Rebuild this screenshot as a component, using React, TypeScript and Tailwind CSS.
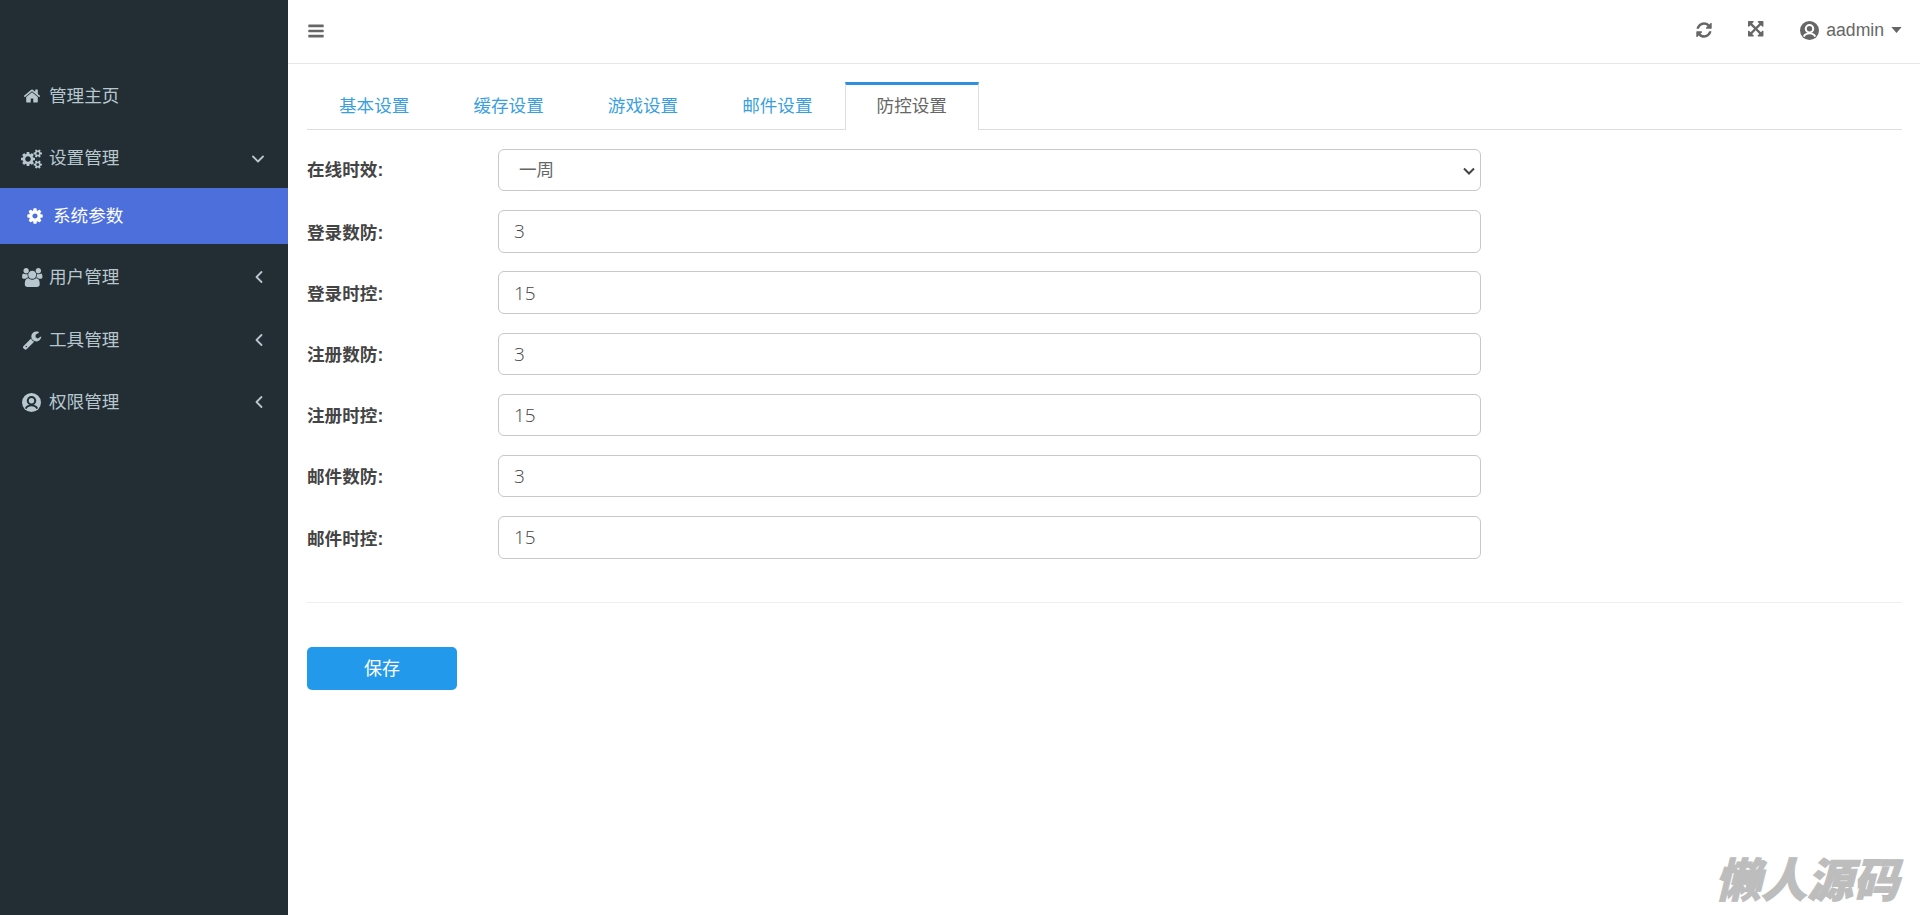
import { ChevronDown, ChevronLeft } from "lucide-react";

const fontStack = { fontFamily: '"Liberation Sans", "Noto Sans CJK SC", sans-serif' };

const tabs = ["基本设置", "缓存设置", "游戏设置", "邮件设置"];

const fields = [
  { label: "登录数防:", value: "3" },
  { label: "登录时控:", value: "15" },
  { label: "注册数防:", value: "3" },
  { label: "注册时控:", value: "15" },
  { label: "邮件数防:", value: "3" },
  { label: "邮件时控:", value: "15" },
];

const icons = {
  home: "M1472 992v480q0 26-19 45t-45 19h-384v-384h-256v384h-384q-26 0-45-19t-19-45v-480q0-1 .5-3t.5-3l575-474 575 474q1 2 1 6zm223-69l-62 74q-8 9-21 11h-3q-13 0-21-7l-692-577-692 577q-12 8-24 7-13-2-21-11l-62-74q-8-10-7-23.5t11-21.5l719-599q32-26 76-26t76 26l244 204v-195q0-14 9-23t23-9h192q14 0 23 9t9 23v408l219 182q10 8 11 21.5t-7 23.5z",
  cogs: "M896 896q0-106-75-181t-181-75-181 75-75 181 75 181 181 75 181-75 75-181zm768 512q0-52-38-90t-90-38-90 38-38 90q0 53 37.5 90.5t90.5 37.5 90.5-37.5 37.5-90.5zm0-1024q0-52-38-90t-90-38-90 38-38 90q0 53 37.5 90.5t90.5 37.5 90.5-37.5 37.5-90.5zm-384 421v185q0 10-7 19.5t-16 10.5l-155 24q-11 35-32 76 34 48 90 115 7 11 7 20 0 12-7 19-23 30-82.5 89.5t-78.5 59.5q-11 0-21-7l-115-90q-37 19-77 31-11 108-23 155-7 24-30 24h-186q-11 0-20-7.5t-10-17.5l-23-153q-34-10-75-31l-118 89q-7 7-20 7-11 0-21-8-144-133-144-160 0-9 7-19 10-14 41-53t47-61q-23-44-35-82l-152-24q-10-1-17-9.5t-7-19.5v-185q0-10 7-19.5t16-10.5l155-24q11-35 32-76-34-48-90-115-7-11-7-20 0-12 7-20 22-30 82-89t79-59q11 0 21 7l115 90q34-18 77-32 11-108 23-154 7-24 30-24h186q11 0 20 7.5t10 17.5l23 153q34 10 75 31l118-89q8-7 20-7 11 0 21 8 144 133 144 160 0 8-7 19-12 16-42 54t-45 60q23 48 34 82l152 23q10 2 17 10.5t7 19.5zm640 533v140q0 16-149 31-12 27-30 52 51 113 51 138 0 4-4 7-122 71-124 71-8 0-46-47t-52-68q-20 2-30 2t-30-2q-14 21-52 68t-46 47q-2 0-124-71-4-3-4-7 0-25 51-138-18-25-30-52-149-15-149-31v-140q0-16 149-31 13-29 30-52-51-113-51-138 0-4 4-7 4-2 35-20t59-34 30-16q8 0 46 46.5t52 67.5q20-2 30-2t30 2q51-71 92-112l6-2q4 0 124 70 4 3 4 7 0 25-51 138 17 23 30 52 149 15 149 31zm0-1024v140q0 16-149 31-12 27-30 52 51 113 51 138 0 4-4 7-122 71-124 71-8 0-46-47t-52-68q-20 2-30 2t-30-2q-14 21-52 68t-46 47q-2 0-124-71-4-3-4-7 0-25 51-138-18-25-30-52-149-15-149-31v-140q0-16 149-31 13-29 30-52-51-113-51-138 0-4 4-7 4-2 35-20t59-34 30-16q8 0 46 46.5t52 67.5q20-2 30-2t30 2q51-71 92-112l6-2q4 0 124 70 4 3 4 7 0 25-51 138 17 23 30 52 149 15 149 31z",
  cog: "M1152 896q0-106-75-181t-181-75-181 75-75 181 75 181 181 75 181-75 75-181zm512-109v222q0 12-8 23t-20 13l-185 28q-19 54-39 91 35 50 107 138 10 12 10 25t-9 23q-27 37-99 108t-94 71q-12 0-26-9l-138-108q-44 23-91 38-16 136-29 186-7 28-36 28h-222q-14 0-24.5-8.5t-11.5-21.5l-28-184q-49-16-90-37l-141 107q-10 9-25 9-14 0-25-11-126-114-165-168-7-10-7-23 0-12 8-23 15-21 51-66.5t54-70.5q-27-50-41-99l-183-27q-13-2-21-12.5t-8-23.5v-222q0-12 8-23t19-13l186-28q14-46 39-92-40-57-107-138-10-12-10-24 0-10 9-23 26-36 98.5-107.5t94.5-71.5q13 0 26 10l138 107q44-23 91-38 16-136 29-186 7-28 36-28h222q14 0 24.5 8.5t11.5 21.5l28 184q49 16 90 37l142-107q9-9 24-9 13 0 25 10 129 119 165 170 7 8 7 22 0 12-8 23-15 21-51 66.5t-54 70.5q26 50 41 98l183 28q13 2 21 12.5t8 23.5z",
  users: "M593 640q-162 5-265 128h-134q-82 0-138-40.5t-56-118.5q0-353 124-353 6 0 43.5 21t97.5 42.5 119 21.5q67 0 133-23-5 37-5 66 0 139 81 256zm1071 637q0 120-73 189.5t-194 69.5h-874q-121 0-194-69.5t-73-189.5q0-53 3.5-103.5t14-109 26.5-108.5 43-97.5 62-81 85.5-53.5 111.5-20q10 0 43 21.5t73 48 107 48 135 21.5 135-21.5 107-48 73-48 43-21.5q61 0 111.5 20t85.5 53.5 62 81 43 97.5 26.5 108.5 14 109 3.5 103.5zm-1024-1277q0 106-75 181t-181 75-181-75-75-181 75-181 181-75 181 75 75 181zm704 384q0 159-112.5 271.5t-271.5 112.5-271.5-112.5-112.5-271.5 112.5-271.5 271.5-112.5 271.5 112.5 112.5 271.5zm576 225q0 78-56 118.5t-138 40.5h-134q-103-123-265-128 81-117 81-256 0-29-5-66 66 23 133 23 59 0 119-21.5t97.5-42.5 43.5-21q124 0 124 353zm-128-609q0 106-75 181t-181 75-181-75-75-181 75-181 181-75 181 75 75 181z",
  wrench: "M448 1472q0-26-19-45t-45-19-45 19-19 45 19 45 45 19 45-19 19-45zm644-420l-682 682q-37 37-90 37-52 0-91-37l-106-108q-38-36-38-90 0-53 38-91l681-681q39 98 114.5 173.5t173.5 114.5zm634-435q0 39-23 106-47 134-164.5 217.5t-258.5 83.5q-185 0-316.5-131.5t-131.5-316.5 131.5-316.5 316.5-131.5q58 0 121.5 16.5t107.5 46.5q16 11 16 28t-16 28l-293 169v224l193 115q5-3 79-48.5t135.5-81 70.5-35.5q15 0 23.5 10t8.5 25z",
  refresh: "M1639 1056q0 5-1 7-64 268-268 434.5t-478 166.5q-146 0-282.5-55t-243.5-157l-129 129q-19 19-45 19t-45-19-19-45v-448q0-26 19-45t45-19h448q26 0 45 19t19 45-19 45l-137 137q71 66 161 102t187 36q134 0 250-65t186-179q11-17 53-117 8-23 30-23h192q13 0 22.5 9.5t9.5 22.5zm25-800v448q0 26-19 45t-45 19h-448q-26 0-45-19t-19-45 19-45l138-138q-148-137-349-137-134 0-250 65t-186 179q-11 17-53 117-8 23-30 23h-199q-13 0-22.5-9.5t-9.5-22.5v-7q65-268 270-434.5t480-166.5q146 0 284 55.5t245 156.5l130-129q19-19 45-19t45 19 19 45z",
  expand: "M1283 413l-355 355 355 355 144-144q29-31 70-14 39 17 39 59v448q0 26-19 45t-45 19h-448q-42 0-59-40-17-39 14-69l144-144-355-355-355 355 144 144q31 30 14 69-17 40-59 40h-448q-26 0-45-19t-19-45v-448q0-42 40-59 39-17 69 14l144 144 355-355-355-355-144 144q-19 19-45 19-12 0-24-5-40-17-40-59v-448q0-26 19-45t45-19h448q42 0 59 40 17 39-14 69l-144 144 355 355 355-355-144-144q-31-30-14-69 17-40 59-40h448q26 0 45 19t19 45v448q0 42-39 59-13 5-25 5-26 0-45-19z",
  bars: "M1664 1344v128q0 26-19 45t-45 19h-1408q-26 0-45-19t-19-45v-128q0-26 19-45t45-19h1408q26 0 45 19t19 45zm0-512v128q0 26-19 45t-45 19h-1408q-26 0-45-19t-19-45v-128q0-26 19-45t45-19h1408q26 0 45 19t19 45zm0-512v128q0 26-19 45t-45 19h-1408q-26 0-45-19t-19-45v-128q0-26 19-45t45-19h1408q26 0 45 19t19 45z",
};

const FaIcon = ({ d, box = "0 0 1792 1792", className }: { d: string; box?: string; className: string }) => {
  return (
    <svg viewBox={box} fill="currentColor" className={className}>
      <path d={d} />
    </svg>
  );
};

// disc with the head and shoulders outlined in the colour behind it
const UserCircle = ({ bg, className }: { bg: string; className: string }) => {
  return (
    <svg viewBox="0 0 24 24" className={className}>
      <circle cx="12" cy="12" r="12" fill="currentColor" />
      <circle cx="12" cy="9.800" r="6" fill={bg} />
      <circle cx="12" cy="9.800" r="3.400" fill="currentColor" />
      <path
        d="M4.800 19.600c1.200-2.800 3.800-4 7.200-4s6 1.200 7.200 4"
        fill="none"
        stroke={bg}
        strokeWidth="2.400"
      />
    </svg>
  );
};

const Sidebar = () => {
  return (
    <aside className="w-[288px] shrink-0 bg-[#222d34] pt-[64px] text-[17.6px] text-[#b8c7ce]">
      <div className="flex h-[64px] items-center pl-[23px]">
        <FaIcon d={icons.home} className="h-[18px] w-[18px]" />
        <span className="ml-[8px]">管理主页</span>
      </div>
      <div className="flex h-[60px] items-center pl-[21px] pt-[1px]">
        <FaIcon d={icons.cogs} box="0 0 1920 1792" className="h-[20px] w-[21px]" />
        <span className="ml-[7px]">设置管理</span>
        <ChevronDown size={20} strokeWidth={2.2} className="ml-[129px]" />
      </div>
      <div className="flex h-[56px] items-center bg-[#4d6fdb] pl-[26px] text-white">
        <FaIcon d={icons.cog} className="h-[18px] w-[18px]" />
        <span className="ml-[9px]">系统参数</span>
      </div>
      <div className="mt-[2px] flex h-[62.5px] items-center pl-[22px]">
        <FaIcon d={icons.users} box="0 -256 1920 1792" className="h-[19px] w-[20.500px]" />
        <span className="ml-[6.500px]">用户管理</span>
        <ChevronLeft size={20} strokeWidth={2.2} className="ml-[130px]" />
      </div>
      <div className="flex h-[62.5px] items-center pl-[22px]">
        <FaIcon d={icons.wrench} className="h-[20px] w-[20px]" />
        <span className="ml-[7px]">工具管理</span>
        <ChevronLeft size={20} strokeWidth={2.2} className="ml-[130px]" />
      </div>
      <div className="flex h-[62.5px] items-center pl-[22px]">
        <UserCircle bg="#222d34" className="h-[19px] w-[19px]" />
        <span className="ml-[8px]">权限管理</span>
        <ChevronLeft size={20} strokeWidth={2.2} className="ml-[130px]" />
      </div>
    </aside>
  );
};

const Header = () => {
  return (
    <header className="flex h-[64px] items-center border-b border-[#e6e6e6] pb-[2px] pl-[19px] pr-[18px] text-[#666]">
      <FaIcon d={icons.bars} className="h-[18px] w-[18px]" />
      <div className="ml-auto flex items-center">
        <FaIcon d={icons.refresh} className="h-[18px] w-[18px]" />
        <FaIcon d={icons.expand} className="ml-[35.500px] h-[18px] w-[18px]" />
        <UserCircle bg="#ffffff" className="ml-[33.500px] h-[19px] w-[19px]" />
        <span className="ml-[7.500px] text-[17.6px]">aadmin</span>
        <svg viewBox="0 0 12 7" fill="currentColor" className="ml-[7px] h-[6px] w-[11px]">
          <path d="M0 0h12L6 7z" />
        </svg>
      </div>
    </header>
  );
};

const App = () => {
  return (
    <div className="relative flex h-[915px] overflow-hidden bg-white" style={fontStack}>
      <Sidebar />
      <main className="min-w-0 flex-1">
        <Header />
        <div className="pl-[19px] pr-[18px] pt-[18px]">
          <nav className="flex h-[48px] border-b border-[#dedede] text-[17.6px]">
            {tabs.map((tab) => (
              <a key={tab} className="flex w-[134.4px] items-center justify-center pt-[1px] text-[#3a9fe0]">
                {tab}
              </a>
            ))}
            <a className="-mb-px flex w-[134.4px] items-center justify-center border-x border-t-[3px] border-x-[#dedede] border-t-[#2f90de] bg-white pb-[2px] text-[#666]">
              防控设置
            </a>
          </nav>

          <form className="mt-[19px]">
            <div className="flex w-[1174px] flex-col gap-[18.8px]">
              <div className="flex h-[42.4px] items-center">
                <label className="w-[191px] text-[17.6px] font-bold text-[#444]">在线时效:</label>
                <div className="relative h-full flex-1">
                  <select className="h-full w-full appearance-none rounded-[6px] border border-[#c8c8c8] bg-white pl-[20px] pr-[8px] text-[17.6px] text-[#666]">
                    <option>一周</option>
                    <option>一月</option>
                  </select>
                  <svg
                    viewBox="0 0 12 8"
                    fill="none"
                    stroke="#444"
                    strokeWidth="2"
                    className="pointer-events-none absolute right-[6px] top-[18px] h-[8px] w-[12px]"
                  >
                    <path d="M1 1.500l5 5 5-5" />
                  </svg>
                </div>
              </div>
              {fields.map((field) => (
                <div key={field.label} className="flex h-[42.4px] items-center">
                  <label className="w-[191px] pt-[3px] text-[17.6px] font-bold text-[#444]">{field.label}</label>
                  <input
                    defaultValue={field.value}
                    className="h-full flex-1 rounded-[6px] border border-[#c8c8c8] px-[15px] font-['Open_Sans'] text-[19px] font-[350] text-[#444]"
                  />
                </div>
              ))}
            </div>

            <div className="mt-[43px] border-t border-[#eeeeee]" />

            <button
              type="button"
              className="mt-[44px] h-[43px] w-[150px] rounded-[5px] bg-[#2399ec] pt-[2px] text-[18px] text-white"
            >
              保存
            </button>
          </form>
        </div>
      </main>

      <div className="absolute bottom-[10px] right-[21px] font-['Noto_Sans_CJK_SC'] text-[46px] font-black italic leading-[56px] text-[#bdbdbd] [-webkit-text-stroke:1px_#bdbdbd]">
        懒人源码
      </div>
    </div>
  );
};

export default App;
